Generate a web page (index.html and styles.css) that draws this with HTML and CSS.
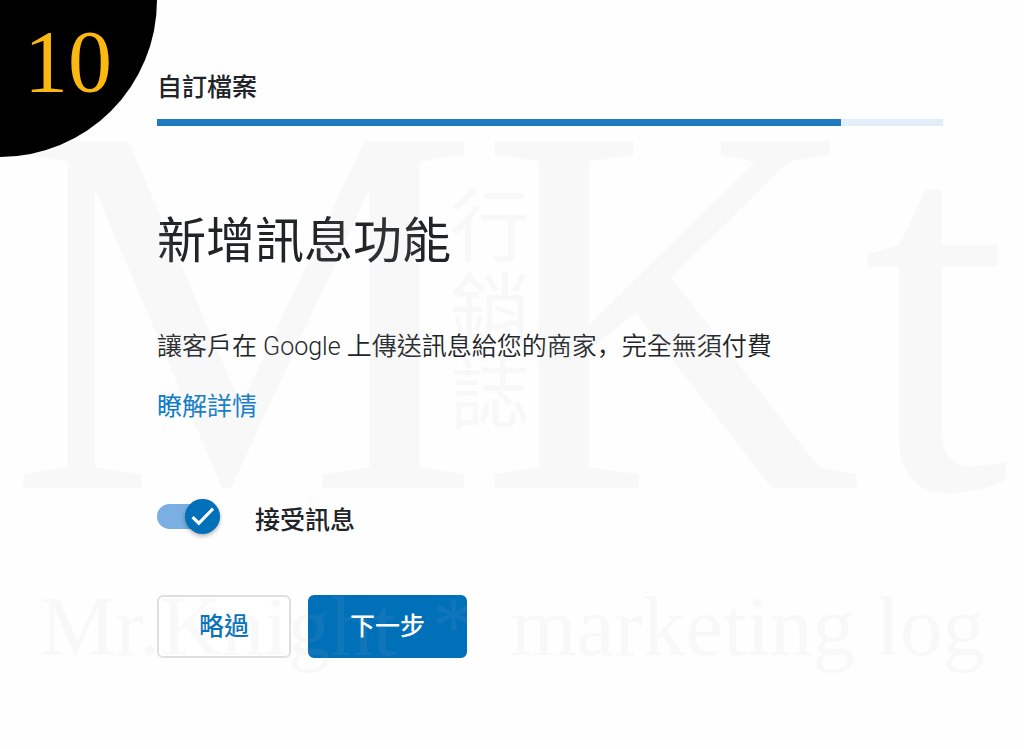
FILE: index.html
```
<!DOCTYPE html>
<html lang="zh-Hant">
<head>
  <meta charset="UTF-8" />
  <meta name="viewport" content="width=device-width, initial-scale=1" />
  <title>自訂檔案</title>
  <link rel="stylesheet" href="styles.css">
</head>
<body>
  <div class="step-badge">10</div>

  <main class="setup">
    <header class="setup-header">
      <label class="setup-label" for="setupProgress">自訂檔案</label>
      <progress class="progress" id="setupProgress" value="87" max="100"></progress>
    </header>

    <h1 class="title">新增訊息功能</h1>
    <p class="intro">讓客戶在 Google 上傳送訊息給您的商家<span class="comma" lang="zh-Hans">，</span>完全無須付費</p>
    <a class="more-link" href="#">瞭解詳情</a>

    <label class="toggle">
      <span class="switch">
        <input type="checkbox" class="switch-input" checked />
        <svg class="switch-check" viewBox="0 0 24 24" aria-hidden="true">
          <path d="M9.2 15.4 5.2 11.6 3.4 13.4 9.2 19 21 6.8 19.3 5.1z" />
        </svg>
      </span>
      接受訊息
    </label>

    <div class="actions">
      <button type="button" class="btn">略過</button>
      <button type="button" class="btn btn-primary">下一步</button>
    </div>
  </main>

  <!-- Watermark, lies over the whole page -->
  <div class="watermark" aria-hidden="true">
    <div class="mark-large">MKt</div>
    <div class="mark-vertical">行銷誌</div>
    <div class="mark-line">
      <span>Mr.Knight</span>
      <span>*</span>
      <span>marketing log</span>
    </div>
  </div>
</body>
</html>
```
FILE: styles.css
```
* { box-sizing: border-box; }
body {
  position: relative;
  margin: 0;
  min-height: 100vh;
  overflow-x: hidden;
  background: #fefefe;
  color: #202427;
  font-family: Roboto, "Noto Sans CJK TC", sans-serif;
  font-size: 25px;
}

/* Step number in the corner */
.step-badge {
  position: absolute;
  top: 0;
  left: 0;
  z-index: 2;
  width: 157px;
  height: 157px;
  padding: 12px 0 0 24px;
  border-bottom-right-radius: 100%;
  background: #000;
  color: #fbb810;
  font-family: "Liberation Serif", serif;
  font-size: 88px;
  line-height: 100px;
}

.setup {
  padding: 72px 81px 80px 157px;
}
.setup-header {
  display: flex;
  flex-direction: column;
  gap: 15px;
}
.setup-label {
  font-weight: 500;
  line-height: 32px;
}
.progress {
  appearance: none;
  display: block;
  width: 100%;
  height: 7px;
  border: none;
  background: #e1edf8;
}
.progress::-webkit-progress-bar { background: #e1edf8; }
.progress::-webkit-progress-value { background: #1f7ac0; }
.progress::-moz-progress-bar { background: #1f7ac0; }

.title {
  margin: 80px 0 0;
  font-size: 49px;
  font-weight: 400;
  line-height: 72px;
}
.intro {
  margin: 50px 0 0;
  font-weight: 350;
  line-height: 32px;
}
.comma { font-family: "Noto Sans CJK SC", sans-serif; }
.more-link {
  display: inline-block;
  margin-top: 28px;
  color: #0b7bc8;
  line-height: 32px;
  text-decoration: none;
}

/* Switch */
.toggle {
  display: flex;
  align-items: flex-start;
  gap: 35px;
  width: fit-content;
  margin-top: 76px;
  font-weight: 500;
  line-height: 44px;
  cursor: pointer;
}
.switch {
  display: grid;
  align-items: center;
  width: 63px;
  height: 35px;
}
.switch-input {
  appearance: none;
  grid-area: 1 / 1;
  display: flex;
  align-items: center;
  width: 63px;
  height: 25px;
  margin: 0;
  border-radius: 13px;
  background: #79afe2;
  cursor: pointer;
}
.switch-input::before {
  content: "";
  width: 35px;
  height: 35px;
  border-radius: 50%;
  background: #0070b9;
  box-shadow: 0 2px 4px rgba(0, 0, 0, 0.3);
}
.switch-input:checked { justify-content: flex-end; }
.switch-check {
  grid-area: 1 / 1;
  justify-self: end;
  z-index: 1;
  width: 31px;
  height: 31px;
  margin-right: 2px;
  fill: #fff;
  pointer-events: none;
}
.switch-input:not(:checked) + .switch-check { visibility: hidden; }

.actions {
  display: flex;
  gap: 17px;
  margin-top: 52px;
}
.btn {
  padding: 0 40px;
  border: 2px solid #dddfe2;
  border-radius: 6px;
  background: #fff;
  color: #0b73bb;
  font: inherit;
  font-weight: 500;
  line-height: 59px;
  cursor: pointer;
}
.btn-primary {
  border-color: #0070b9;
  background: #0070b9;
  color: #fff;
}

.watermark {
  position: absolute;
  inset: 0;
  overflow: hidden;
  color: rgba(190, 190, 190, 0.09);
  font-family: "Liberation Serif", serif;
  pointer-events: none;
}
.mark-large {
  position: absolute;
  top: 0;
  left: 8px;
  font-size: 530px;
  line-height: 620px;
  white-space: nowrap;
}
.mark-vertical {
  position: absolute;
  top: 178px;
  left: 450px;
  width: 80px;
  font-family: "Noto Sans CJK TC", sans-serif;
  font-size: 80px;
  line-height: 84px;
}
.mark-line {
  position: absolute;
  top: 578px;
  left: 40px;
  right: 39px;
  display: flex;
  justify-content: space-between;
  font-size: 85px;
  line-height: 96px;
  white-space: nowrap;
}
```
